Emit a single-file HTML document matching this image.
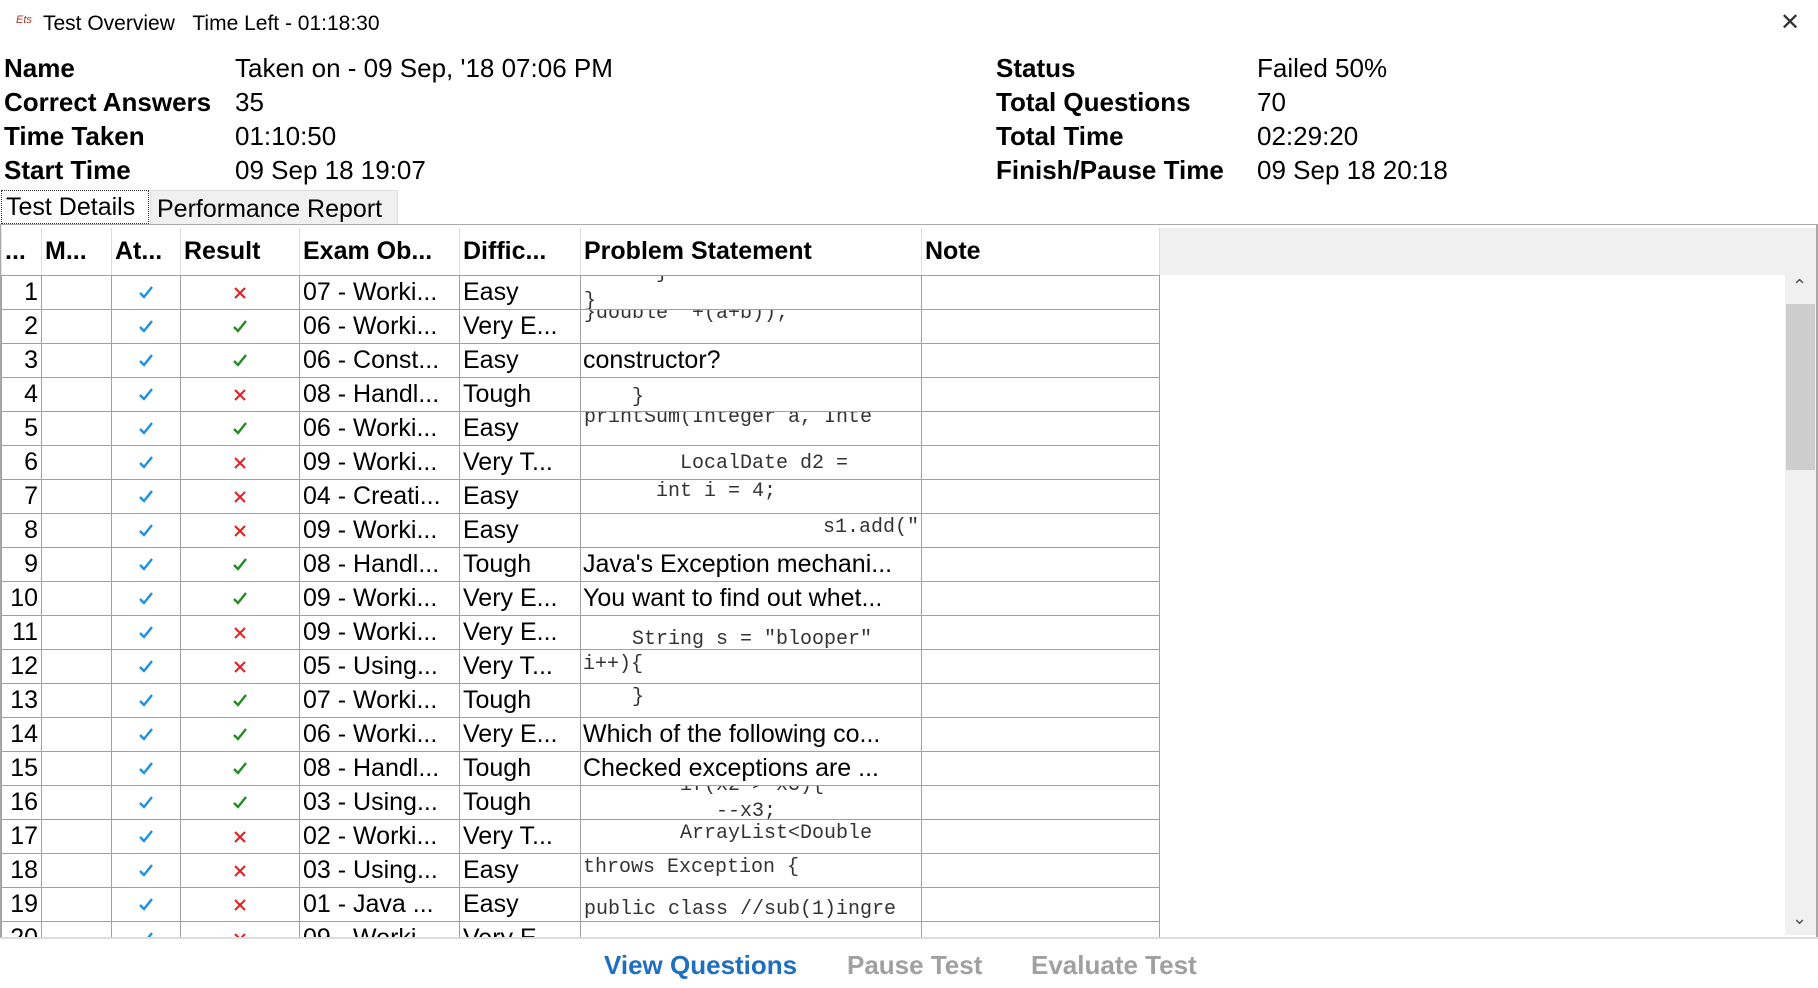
<!DOCTYPE html>
<html><head><meta charset="utf-8"><style>
*{margin:0;padding:0;box-sizing:border-box}
body{width:1818px;height:988px;background:#fff;position:relative;overflow:hidden;font-family:"Liberation Sans",sans-serif;color:#000}
.a{position:absolute;white-space:nowrap}
.lbl{font-weight:bold;font-size:26px}
.val{font-size:26px}
table{position:absolute;left:1px;top:228px;border-collapse:collapse;table-layout:fixed;font-size:25px}
td,th{border:1px solid #a0a0a0;height:34px;overflow:hidden;white-space:nowrap;padding:0 3px;position:relative}
th{height:47px;border-top:none;text-align:left;font-weight:bold;border-color:#e6e6e6;border-right:1px solid #ddd}
td.n{text-align:right}
td.c{text-align:center}
.m{font-family:"Liberation Mono",monospace;font-size:20px;color:#333;position:absolute;left:3px;white-space:pre}
</style></head><body>
<div class="a" style="left:16px;top:14px;font-size:11px;color:#b03030;font-style:italic">Ets</div>
<div class="a" style="left:43px;top:12px;font-size:21px">Test Overview&nbsp;&nbsp;&nbsp;Time Left - 01:18:30</div>
<div class="a" style="left:1780px;top:8px;font-size:24px;color:#333">✕</div>

<div class="a lbl" style="left:4px;top:53px">Name</div>
<div class="a lbl" style="left:4px;top:87px">Correct Answers</div>
<div class="a lbl" style="left:4px;top:121px">Time Taken</div>
<div class="a lbl" style="left:4px;top:155px">Start Time</div>
<div class="a val" style="left:235px;top:53px">Taken on - 09 Sep, '18 07:06 PM</div>
<div class="a val" style="left:235px;top:87px">35</div>
<div class="a val" style="left:235px;top:121px">01:10:50</div>
<div class="a val" style="left:235px;top:155px">09 Sep 18 19:07</div>
<div class="a lbl" style="left:996px;top:53px">Status</div>
<div class="a lbl" style="left:996px;top:87px">Total Questions</div>
<div class="a lbl" style="left:996px;top:121px">Total Time</div>
<div class="a lbl" style="left:996px;top:155px">Finish/Pause Time</div>
<div class="a val" style="left:1257px;top:53px">Failed 50%</div>
<div class="a val" style="left:1257px;top:87px">70</div>
<div class="a val" style="left:1257px;top:121px">02:29:20</div>
<div class="a val" style="left:1257px;top:155px">09 Sep 18 20:18</div>

<div class="a" style="left:1px;top:190px;width:148px;height:34px;border:1px dotted #333;background:#fff;font-size:25px;padding:0 4px;line-height:32px">Test Details</div>
<div class="a" style="left:150px;top:190px;width:248px;height:35px;background:#f0f0f0;border:1px solid #ddd;font-size:25px;padding:0 6px;line-height:36px">Performance Report</div>
<div class="a" style="left:0;top:224px;width:1818px;height:714px;border:1px solid #a8a8a8;border-right:2px solid #a8a8a8"></div>
<div class="a" style="left:1159px;top:228px;width:657px;height:47px;background:#f0f0f0"></div>
<div class="a" style="left:1785px;top:275px;width:31px;height:660px;background:#f0f0f0"></div>
<div class="a" style="left:1786px;top:304px;width:29px;height:166px;background:#cdcdcd"></div>
<div class="a" style="left:1792px;top:276px;font-size:18px;color:#555">⌃</div>
<div class="a" style="left:1792px;top:908px;font-size:18px;color:#555">⌄</div>

<table>
<colgroup><col style="width:40px"><col style="width:70px"><col style="width:69px"><col style="width:119px"><col style="width:160px"><col style="width:121px"><col style="width:341px"><col style="width:238px"></colgroup>
<tr><th>...</th><th>M...</th><th>At...</th><th>Result</th><th>Exam Ob...</th><th>Diffic...</th><th>Problem Statement</th><th>Note</th></tr>
</table>
<div id="rows"></div>
<script>
var R=[
[0,"07 - Worki...","Easy",'<span class="m" style="top:-14px">      }</span><span class="m" style="top:14px">}</span>'],
[1,"06 - Worki...","Very E...",'<span class="m" style="top:-8px">}double "+(a+b));</span>'],
[1,"06 - Const...","Easy","constructor?"],
[0,"08 - Handl...","Tough",'<span class="m" style="top:8px">    }</span>'],
[1,"06 - Worki...","Easy",'<span class="m" style="top:-6px">printSum(Integer a, Inte</span>'],
[0,"09 - Worki...","Very T...",'<span class="m" style="top:6px">        LocalDate d2 =</span>'],
[0,"04 - Creati...","Easy",'<span class="m" style="top:0px">      int i = 4;</span>'],
[0,"09 - Worki...","Easy",'<span class="m" style="top:2px;left:auto;right:2px">s1.add("</span>'],
[1,"08 - Handl...","Tough","Java's Exception mechani..."],
[1,"09 - Worki...","Very E...","You want to find out whet..."],
[0,"09 - Worki...","Very E...",'<span class="m" style="top:12px">    String s = "blooper"</span>'],
[0,"05 - Using...","Very T...",'<span class="m" style="top:3px;left:2px">i++){</span>'],
[1,"07 - Worki...","Tough",'<span class="m" style="top:2px">    }</span>'],
[1,"06 - Worki...","Very E...","Which of the following co..."],
[1,"08 - Handl...","Tough","Checked exceptions are ..."],
[1,"03 - Using...","Tough",'<span class="m" style="top:-12px">        if(x2 > x3){</span><span class="m" style="top:14px">           --x3;</span>'],
[0,"02 - Worki...","Very T...",'<span class="m" style="top:2px">        ArrayList&lt;Double</span>'],
[0,"03 - Using...","Easy",'<span class="m" style="top:2px;left:2px">throws Exception {</span>'],
[0,"01 - Java ...","Easy",'<span class="m" style="top:10px">public class //sub(1)ingre</span>'],
[0,"09 - Worki...","Very E...",""]
];
var ck='<svg width="16" height="16" viewBox="0 0 16 16"><path d="M2 9 L6 13 L14 3" stroke="#1f8fe0" stroke-width="2.4" fill="none"/></svg>';
var gk='<svg width="16" height="16" viewBox="0 0 16 16"><path d="M2 9 L6 13 L14 3" stroke="#228b22" stroke-width="2.4" fill="none"/></svg>';
var rx='<svg width="14" height="14" viewBox="0 0 14 14"><path d="M2 2 L12 12 M12 2 L2 12" stroke="#e02020" stroke-width="2" fill="none"/></svg>';
var h='<table style="top:275px"><colgroup><col style="width:40px"><col style="width:70px"><col style="width:69px"><col style="width:119px"><col style="width:160px"><col style="width:121px"><col style="width:341px"><col style="width:238px"></colgroup>';
R.forEach(function(r,i){
 var ps=r[3].indexOf('<span')>=0?r[3]:'<span style="position:absolute;left:2px;top:2px">'+r[3]+'</span>';
 h+='<tr><td class="n">'+(i+1)+'</td><td></td><td class="c">'+ck+'</td><td class="c">'+(r[0]?gk:rx)+'</td><td>'+r[1]+'</td><td>'+r[2]+'</td><td>'+ps+'</td><td></td></tr>';
});
h+='</table>';
document.getElementById('rows').innerHTML='<div class="a" style="left:0;top:0;width:1785px;height:937px;overflow:hidden">'+h+'</div>';
</script>
<div class="a" style="left:1px;top:937px;width:1817px;height:2px;background:#ddd"></div>
<div class="a" style="left:604px;top:950px;font-size:26px;font-weight:bold;color:#1e6fc0">View Questions</div>
<div class="a" style="left:847px;top:950px;font-size:26px;font-weight:bold;color:#a0a0a0">Pause Test</div>
<div class="a" style="left:1031px;top:950px;font-size:26px;font-weight:bold;color:#a0a0a0">Evaluate Test</div>
</body></html>
